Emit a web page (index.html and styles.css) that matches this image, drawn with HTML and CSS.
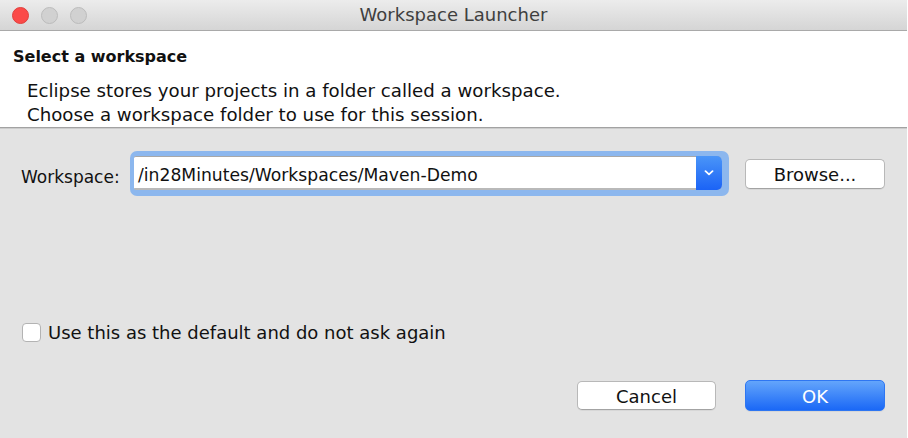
FILE: index.html
```html
<!DOCTYPE html>
<html>
<head>
<meta charset="utf-8">
<link rel="stylesheet" href="styles.css">
</head>
<body>
<div class="window">
  <div class="titlebar">
    <div class="lights">
      <span class="light red"></span>
      <span class="light gray"></span>
      <span class="light gray"></span>
    </div>
    <div class="title">Workspace Launcher</div>
  </div>
  <div class="header">
    <div class="heading">Select a workspace</div>
    <div class="desc">
      <div>Eclipse stores your projects in a folder called a workspace.</div>
      <div>Choose a workspace folder to use for this session.</div>
    </div>
  </div>
  <div class="sep"></div>
  <div class="content">
    <div class="ws-row">
      <label class="ws-label">Workspace:</label>
      <div class="ring">
        <div class="combo">
          <span class="combo-text">/in28Minutes/Workspaces/Maven-Demo</span>
          <span class="drop">
            <svg width="10" height="6" viewBox="0 0 10 6"><path d="M1.5 1.2 L5 4.4 L8.5 1.2" fill="none" stroke="#fff" stroke-width="1.8" stroke-linecap="round" stroke-linejoin="round"/></svg>
          </span>
        </div>
      </div>
      <button class="btn browse">Browse...</button>
    </div>
    <div class="check-row">
      <span class="checkbox"></span>
      <span class="check-label">Use this as the default and do not ask again</span>
    </div>
    <div class="btn-row">
      <button class="btn cancel">Cancel</button>
      <button class="btn ok">OK</button>
    </div>
  </div>
</div>
</body>
</html>
```
FILE: styles.css
```css
html, body {
  margin: 0;
  padding: 0;
  background: #ffffff;
}
body {
  font-family: "DejaVu Sans", "Liberation Sans", sans-serif;
  color: #111;
}
.window {
  width: 907px;
  height: 438px;
  display: flex;
  flex-direction: column;
  background: #e3e3e3;
}
.titlebar {
  position: relative;
  height: 30px;
  flex: none;
  background: linear-gradient(#ececec, #d5d5d5);
  border-bottom: 1px solid #a9a9a9;
  display: flex;
  align-items: center;
  justify-content: center;
}
.lights {
  position: absolute;
  left: 12px;
  top: 7px;
  display: flex;
  gap: 12px;
}
.light {
  width: 17px;
  height: 17px;
  border-radius: 50%;
  box-sizing: border-box;
}
.light.red {
  background: #fb4a48;
  border: 1px solid #e0403d;
}
.light.gray {
  background: #d1d1d1;
  border: 1px solid #bcbcbc;
}
.title {
  font-size: 18px;
  color: #3f3f3f;
  line-height: 30px;
}
.header {
  flex: none;
  height: 96px;
  box-sizing: border-box;
  background: #ffffff;
  padding: 16px 0 0 13px;
}
.heading {
  font-weight: bold;
  font-size: 16px;
  line-height: 20px;
  color: #111;
}
.desc {
  margin-top: 12px;
  padding-left: 14px;
  font-size: 18.2px;
  line-height: 24px;
  color: #111;
}
.sep {
  flex: none;
  height: 0;
  border-top: 1px solid #a2a2a2;
  border-bottom: 1px solid #cccccc;
}
.content {
  flex: 1;
  display: flex;
  flex-direction: column;
  padding: 22px 22px 27px 21px;
}
.ws-row {
  display: flex;
  align-items: center;
}
.ws-label {
  font-size: 17px;
  color: #111;
  width: 109px;
  padding-top: 6px;
}
.ring {
  width: 599px;
  height: 45px;
  box-sizing: border-box;
  padding: 5px 7px 6px 4px;
  border-radius: 7px;
  background: #8cb7ee;
}
.combo {
  height: 34px;
  box-sizing: border-box;
  background: #ffffff;
  border-top: 1px solid #a8a8a8;
  border-bottom: 2px solid #b9b9b9;
  border-radius: 2px 5px 5px 2px;
  display: flex;
  align-items: center;
}
.combo-text {
  flex: 1;
  padding: 4px 0 0 4px;
  font-size: 17.2px;
  color: #111;
}
.drop {
  width: 26px;
  align-self: stretch;
  margin: -1px 0 -2px 0;
  border-radius: 0 5px 5px 0;
  background: linear-gradient(#4a95f8, #1b63f6);
  display: flex;
  align-items: center;
  justify-content: center;
}
.btn {
  font-family: "DejaVu Sans", "Liberation Sans", sans-serif;
  font-size: 18px;
  color: #111;
  background: #ffffff;
  border: 1px solid #b8b8b8;
  border-bottom-color: #a3a3a3;
  border-radius: 5px;
  padding: 2px 0 0 0;
  box-shadow: 0 1px 0 rgba(0,0,0,0.05);
}
.browse {
  width: 140px;
  height: 30px;
  margin-left: 16px;
}
.check-row {
  margin-top: 125px;
  display: flex;
  align-items: center;
  padding-left: 1px;
}
.checkbox {
  width: 19px;
  height: 19px;
  box-sizing: border-box;
  background: #ffffff;
  border: 1px solid #b3b3b3;
  border-radius: 4px;
  margin-right: 7px;
}
.check-label {
  font-size: 18px;
  color: #111;
  padding-top: 1px;
}
.btn-row {
  margin-top: auto;
  display: flex;
  justify-content: flex-end;
  align-items: center;
  gap: 29px;
}
.cancel {
  width: 139px;
  height: 29px;
}
.ok {
  width: 140px;
  height: 31px;
  color: #ffffff;
  border: 1px solid #2e76f2;
  background: linear-gradient(#63a5fb, #1b68f6);
}
```
